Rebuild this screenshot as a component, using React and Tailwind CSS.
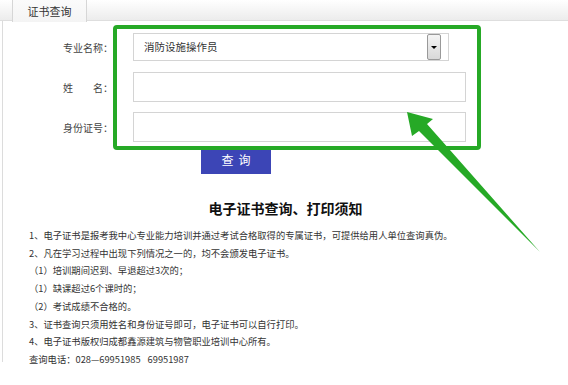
import React from "react";

const lines = [
  "1、电子证书是报考我中心专业能力培训并通过考试合格取得的专属证书，可提供给用人单位查询真伪。",
  "2、凡在学习过程中出现下列情况之一的，均不会颁发电子证书。",
  "（1）培训期间迟到、早退超过3次的；",
  "（1）缺课超过6个课时的；",
  "（2）考试成绩不合格的。",
  "3、证书查询只须用姓名和身份证号即可，电子证书可以自行打印。",
  "4、电子证书版权归成都鑫源建筑与物管职业培训中心所有。",
];

function FormRow({ label, children, className }) {
  return (
    <div className={`flex items-center ${className}`}>
      <div className="w-[110px] text-right text-[10px] text-[#444] whitespace-pre">{label}</div>
      <div className="ml-[20px]">{children}</div>
    </div>
  );
}

export default function App() {
  return (
    <div
      className="relative w-[568px] h-[385px] bg-white overflow-hidden"
      style={{ fontFamily: '"Noto Sans CJK SC", "Noto Sans", sans-serif' }}
    >
      {/* tab bar */}
      <div className="h-[21px] bg-gradient-to-b from-white to-[#ececec] border-b border-[#dedede] flex">
        <div className="ml-[12px] w-[75px] h-[22px] bg-gradient-to-b from-[#fbfbfb] to-[#f4f4f4] border-x border-[#d6d6d6] flex items-center justify-center text-[11px] text-[#333]">
          证书查询
        </div>
      </div>

      {/* content */}
      <div className="ml-[2px] h-[341px] border-l border-[#dcdcdc] pt-[12px]">
        <FormRow label="专业名称：">
          <div className="w-[316px] h-[28px] border border-[#d4d4d4] flex items-center pl-[10px] pr-[7px]">
            <span className="flex-1 text-[10.5px] text-[#333]">消防设施操作员</span>
            <div className="w-[14px] h-[26px] rounded-[2px] border border-[#999] bg-gradient-to-b from-[#f4f4f4] to-[#d8d8d8] flex items-center justify-center">
              <div className="w-0 h-0 border-x-[3px] border-x-transparent border-t-[3px] border-t-black" />
            </div>
          </div>
        </FormRow>
        <FormRow label="姓　　名：" className="mt-[11px]">
          <div className="w-[333px] h-[30px] border border-[#d4d4d4]" />
        </FormRow>
        <FormRow label="身份证号：" className="mt-[10px]">
          <div className="w-[333px] h-[30px] border border-[#d4d4d4]" />
        </FormRow>

        <div className="mt-[4px] ml-[198px] w-[70px] h-[28px] bg-[#3c45b6] flex items-center justify-center text-white text-[12px] tracking-[5px] pl-[5px]">
          查询
        </div>

        <div className="mt-[24px] text-center text-[14px] font-bold text-[#111] leading-[20px]">
          电子证书查询、打印须知
        </div>

        <div className="mt-[9px] pl-[26px] text-[9.3px] leading-[17.7px] text-[#333]">
          {lines.map((l, i) => (
            <div key={i} className="whitespace-nowrap">
              {l}
            </div>
          ))}
          <div className="whitespace-nowrap">
            查询电话：028—69951985<span className="ml-[7px]">69951987</span>
          </div>
        </div>
      </div>

      {/* green highlight */}
      <div className="absolute left-[113px] top-[25px] w-[368px] h-[125px] border-[4px] border-[#26a926] rounded-[4px]" />
      <svg className="absolute inset-0 pointer-events-none" width="568" height="385">
        <polygon
          points="407,112 433,119 427,124 540,252 419,131 412,136"
          fill="#26a926"
        />
      </svg>
    </div>
  );
}
